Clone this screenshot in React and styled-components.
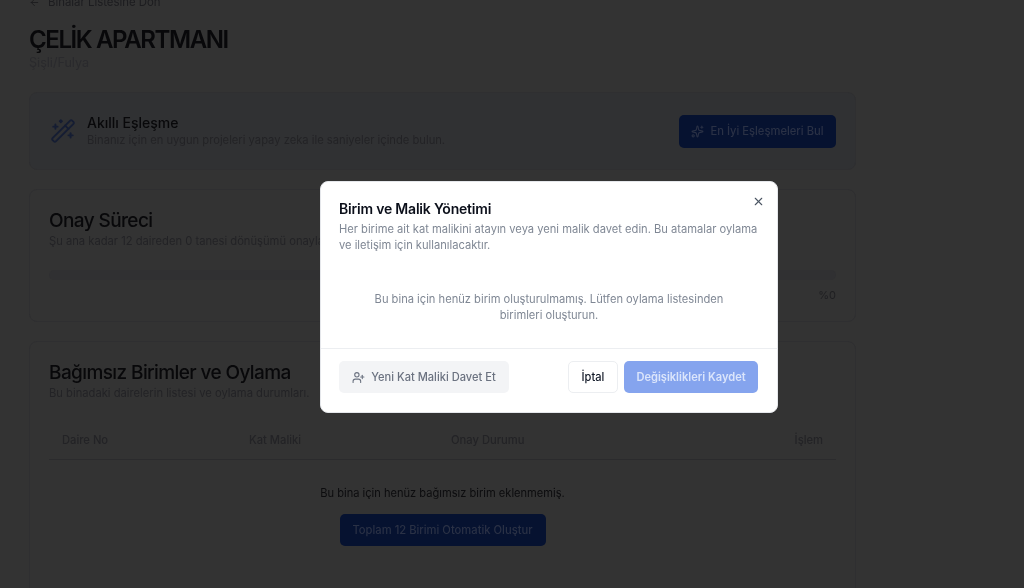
import React from "react";
import styled, { createGlobalStyle } from "styled-components";
import { ArrowLeft, WandSparkles, Sparkles, UserPlus, X } from "lucide-react";

const GlobalStyle = createGlobalStyle`
  html, body {
    margin: 0;
    height: 100%;
    overflow: hidden;
    background: #333333;
    font-family: Inter, "Noto Sans", sans-serif;
  }
  * {
    box-sizing: border-box;
  }
`;

const Page = styled.main`
  width: 856px;
  height: 588px;
  padding: 0 0 0 29px;
  overflow: hidden;
  filter: blur(0.35px);
`;

const BackLink = styled.a`
  display: flex;
  align-items: center;
  gap: 8px;
  height: 16px;
  margin-top: -6px;
  font-size: 11.4px;
  color: #1c1c1f;
`;

const Title = styled.h1`
  margin: 14px 0 0;
  font-size: 24px;
  line-height: 31px;
  font-weight: 600;
  letter-spacing: -1.4px;
  color: #08080a;
`;

const Location = styled.div`
  font-size: 12.6px;
  line-height: 16px;
  color: #2a2a2d;
`;

const Card = styled.section`
  margin-top: ${(props) => props.gap || "19px"};
  border: 1px solid #2f2f31;
  border-radius: 8px;
  background: ${(props) => props.background || "#333333"};
  padding: ${(props) => props.padding || "19px"};
`;

const MatchCard = styled(Card)`
  display: flex;
  align-items: center;
  justify-content: space-between;
  height: 78px;
`;

const MatchLeft = styled.div`
  display: flex;
  align-items: center;
  gap: 11px;
  margin-left: 1px;
  color: #151d33;
`;

const MatchTitle = styled.div`
  font-size: 14px;
  line-height: 18px;
  font-weight: 500;
  color: #08080a;
`;

const Muted = styled.div`
  font-size: 11.2px;
  line-height: 16px;
  color: #232326;
`;

const PrimaryButton = styled.button`
  display: flex;
  align-items: center;
  justify-content: center;
  gap: 6px;
  width: ${(props) => props.width};
  height: ${(props) => props.height || "33px"};
  padding: 0;
  border: 0;
  border-radius: 5px;
  background: #061230;
  color: #2a3145;
  font: 500 11.2px Inter, sans-serif;
`;

const SectionTitle = styled.h2`
  margin: 0;
  font-size: 19px;
  line-height: 24px;
  font-weight: 500;
  letter-spacing: -0.6px;
  color: #08080a;
`;

const ProgressRow = styled.div`
  margin-top: 21px;
  height: 10px;
  border-radius: 5px;
  background: #303032;
`;

const Percent = styled.div`
  margin-top: 7px;
  text-align: right;
  font-size: 11px;
  line-height: 16px;
  color: #1f1f22;
`;

const TableHead = styled.div`
  display: grid;
  grid-template-columns: 187px 202px 1fr auto;
  align-items: center;
  height: 40px;
  margin-top: 19px;
  padding: 0 13px;
  border-bottom: 1px solid #2b2b2d;
  font-size: 11.2px;
  font-weight: 500;
  color: #232326;
`;

const EmptyUnits = styled.div`
  display: flex;
  flex-direction: column;
  align-items: center;
  gap: 13px;
  height: 200px;
  padding-top: 25px;
  font-size: 11.1px;
  line-height: 16px;
  color: #0c0c0e;
`;

const Overlay = styled.div`
  position: fixed;
  inset: 0;
  display: flex;
  justify-content: center;
  padding: 181px 0 0 74px;
`;

const Modal = styled.div`
  position: relative;
  display: flex;
  flex-direction: column;
  width: 458px;
  height: 232px;
  border-radius: 8px;
  background: #ffffff;
  border: 1px solid #e5e7eb;
  filter: blur(0.3px);
`;

const CloseButton = styled.button`
  position: absolute;
  top: 13px;
  right: 12px;
  display: flex;
  padding: 0;
  border: 0;
  background: none;
  color: #4b5563;
`;

const ModalHeader = styled.div`
  padding: 18px 19px 0 18px;
`;

const ModalTitle = styled.h3`
  margin: 0;
  font-size: 14px;
  line-height: 18px;
  font-weight: 600;
  letter-spacing: -0.2px;
  color: #0b0f1a;
`;

const ModalText = styled.p`
  margin: 3px 0 0;
  font-size: 11.15px;
  line-height: 16px;
  color: #7f8794;
`;

const ModalEmpty = styled.p`
  margin: 0;
  flex: 1;
  display: flex;
  align-items: center;
  justify-content: center;
  text-align: center;
  padding: 12px 40px 0;
  font-size: 11.15px;
  line-height: 16px;
  color: #7f8794;
`;

const ModalFooter = styled.div`
  display: flex;
  align-items: flex-start;
  justify-content: space-between;
  height: 64px;
  padding: 12px 19px 0 18px;
  border-top: 1px solid #eceef1;
`;

const FooterActions = styled.div`
  display: flex;
  gap: 6px;
`;

const FooterButton = styled.button`
  display: flex;
  align-items: center;
  justify-content: center;
  gap: 6px;
  width: ${(props) => props.width};
  height: 32px;
  padding: 0;
  border: 1px solid ${(props) => props.border || "transparent"};
  border-radius: 5px;
  background: ${(props) => props.background};
  color: ${(props) => props.color};
  font: ${(props) => props.weight || 500} 11.1px Inter, sans-serif;
`;

export default function App() {
  return (
    <>
      <GlobalStyle />
      <Page>
        <BackLink>
          <ArrowLeft size={11} />
          Binalar Listesine Dön
        </BackLink>
        <Title>ÇELİK APARTMANI</Title>
        <Location>Şişli/Fulya</Location>

        <MatchCard gap="21px" background="#303133">
          <MatchLeft>
            <WandSparkles size={26} strokeWidth={1.75} />
            <div>
              <MatchTitle>Akıllı Eşleşme</MatchTitle>
              <Muted>Binanız için en uygun projeleri yapay zeka ile saniyeler içinde bulun.</Muted>
            </div>
          </MatchLeft>
          <PrimaryButton width="157px">
            <Sparkles size={13} />
            En İyi Eşleşmeleri Bul
          </PrimaryButton>
        </MatchCard>

        <Card padding="19px 19px 18px">
          <SectionTitle>Onay Süreci</SectionTitle>
          <Muted>Şu ana kadar 12 daireden 0 tanesi dönüşümü onayladı.</Muted>
          <ProgressRow />
          <Percent>%0</Percent>
        </Card>

        <Card>
          <SectionTitle>Bağımsız Birimler ve Oylama</SectionTitle>
          <Muted>Bu binadaki dairelerin listesi ve oylama durumları.</Muted>
          <TableHead>
            <span>Daire No</span>
            <span>Kat Maliki</span>
            <span>Onay Durumu</span>
            <span>İşlem</span>
          </TableHead>
          <EmptyUnits>
            Bu bina için henüz bağımsız birim eklenmemiş.
            <PrimaryButton width="206px" height="32px">
              Toplam 12 Birimi Otomatik Oluştur
            </PrimaryButton>
          </EmptyUnits>
        </Card>
      </Page>

      <Overlay>
        <Modal>
          <CloseButton>
            <X size={13} />
          </CloseButton>
          <ModalHeader>
            <ModalTitle>Birim ve Malik Yönetimi</ModalTitle>
            <ModalText>
              Her birime ait kat malikini atayın veya yeni malik davet edin. Bu atamalar oylama ve
              iletişim için kullanılacaktır.
            </ModalText>
          </ModalHeader>
          <ModalEmpty>
            Bu bina için henüz birim oluşturulmamış. Lütfen oylama listesinden birimleri oluşturun.
          </ModalEmpty>
          <ModalFooter>
            <FooterButton width="170px" background="#f3f4f6" color="#6b7280">
              <UserPlus size={13} />
              Yeni Kat Maliki Davet Et
            </FooterButton>
            <FooterActions>
              <FooterButton width="50px" background="#ffffff" color="#111827" border="#eceef1">
                İptal
              </FooterButton>
              <FooterButton width="134px" background="#85a4ee" color="#dbe5fb" weight={600}>
                Değişiklikleri Kaydet
              </FooterButton>
            </FooterActions>
          </ModalFooter>
        </Modal>
      </Overlay>
    </>
  );
}
